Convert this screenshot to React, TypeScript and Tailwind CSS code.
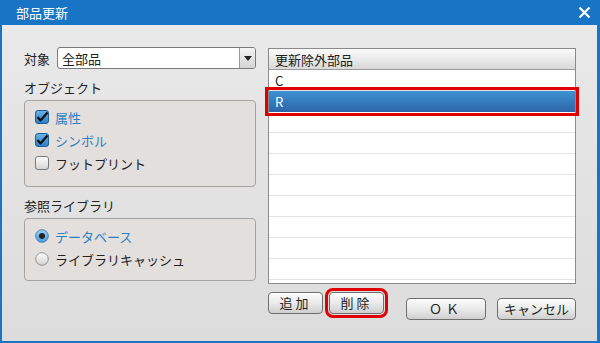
import React from "react";

const font = { fontFamily: '"Noto Sans CJK JP", "Noto Sans", sans-serif' };

function Check({ checked }: { checked: boolean }) {
  return (
    <svg width="14" height="14" viewBox="0 0 14 14" className="shrink-0">
      <defs>
        <linearGradient id={checked ? "cb1" : "cb0"} x1="0" y1="0" x2="0" y2="1">
          {checked ? (
            <>
              <stop offset="0" stopColor="#6bb3ea" />
              <stop offset="1" stopColor="#2b7fc9" />
            </>
          ) : (
            <>
              <stop offset="0" stopColor="#ffffff" />
              <stop offset="1" stopColor="#d2d2d2" />
            </>
          )}
        </linearGradient>
      </defs>
      <rect x="0.5" y="0.5" width="13" height="13" rx="2.5" fill={`url(#${checked ? "cb1" : "cb0"})`} stroke={checked ? "#1f5f95" : "#7a7a7a"} />
      {checked && <path d="M2.5 7 L5.5 10.5 L12.5 2.5" fill="none" stroke="#111" strokeWidth="2.2" strokeLinejoin="round" />}
    </svg>
  );
}

function Radio({ checked }: { checked: boolean }) {
  return (
    <svg width="14" height="14" viewBox="0 0 14 14" className="shrink-0">
      <defs>
        <linearGradient id={checked ? "rb1" : "rb0"} x1="0" y1="0" x2="0" y2="1">
          {checked ? (
            <>
              <stop offset="0" stopColor="#9fd0f5" />
              <stop offset="1" stopColor="#4b9be0" />
            </>
          ) : (
            <>
              <stop offset="0" stopColor="#ffffff" />
              <stop offset="1" stopColor="#cfcfcf" />
            </>
          )}
        </linearGradient>
      </defs>
      <circle cx="7" cy="7" r="6.3" fill={`url(#${checked ? "rb1" : "rb0"})`} stroke={checked ? "#3a78b0" : "#8a8a8a"} strokeWidth="0.9" />
      {checked && <circle cx="7" cy="7" r="3" fill="#222" />}
    </svg>
  );
}

function Btn({ children, className = "" }: { children: React.ReactNode; className?: string }) {
  return (
    <div
      className={`flex items-center justify-center rounded-[4px] border border-[#6e6e6e] bg-gradient-to-b from-[#fbfbfb] via-[#eaeaea] to-[#cfcfcf] text-[13px] text-[#222] shadow-[inset_0_1px_0_#fff] ${className}`}
    >
      {children}
    </div>
  );
}

export default function App() {
  const rows = ["C", "R", "", "", "", "", "", "", "", ""];
  return (
    <div className="flex h-[343px] w-[600px] flex-col bg-[#1874c4]" style={font}>
      <div className="flex h-[25px] items-center justify-between pl-[16px] pr-[9px] text-white">
        <span className="text-[13px] leading-none">部品更新</span>
        <svg width="13" height="13" viewBox="0 0 13 13">
          <path d="M1.5 1.5 L11.5 11.5 M11.5 1.5 L1.5 11.5" stroke="#fff" strokeWidth="2.2" />
        </svg>
      </div>
      <div className="mb-[2px] ml-[2px] mr-[3px] flex flex-1 gap-[12px] bg-gradient-to-b from-[#e9e9e9] to-[#dcdcdc] pl-[22px] pt-[22px] text-[13px] text-[#222]">
        {/* Left column */}
        <div className="flex w-[232px] flex-col">
          <div className="flex h-[22px] items-center">
            <span className="w-[33px] leading-none">対象</span>
            <div className="flex h-[22px] flex-1 items-stretch rounded-[3px] border border-[#7a7a7a] bg-white">
              <span className="flex flex-1 items-center pl-[4px] leading-none">全部品</span>
              <div className="flex w-[16px] items-center justify-center rounded-r-[2px] border-l border-[#9a9a9a] bg-gradient-to-b from-[#f4f4f4] to-[#d4d4d4]">
                <svg width="8" height="5" viewBox="0 0 8 5">
                  <path d="M0 0 L8 0 L4 5 Z" fill="#222" />
                </svg>
              </div>
            </div>
          </div>
          <div className="mt-[9px] h-[20px] leading-[20px]">オブジェクト</div>
          <div className="mt-[2px] flex h-[87px] flex-col gap-[5px] rounded-[4px] border border-[#a4a4a4] bg-[#e2dfdd] pl-[10px] pt-[7px]">
            <div className="flex h-[18px] items-center gap-[6px]">
              <Check checked />
              <span className="leading-none text-[#2f7fc4]">属性</span>
            </div>
            <div className="flex h-[18px] items-center gap-[6px]">
              <Check checked />
              <span className="leading-none text-[#2f7fc4]">シンボル</span>
            </div>
            <div className="flex h-[18px] items-center gap-[6px]">
              <Check checked={false} />
              <span className="leading-none">フットプリント</span>
            </div>
          </div>
          <div className="mt-[9px] h-[20px] leading-[20px]">参照ライブラリ</div>
          <div className="mt-[2px] flex h-[63px] flex-col gap-[5px] rounded-[4px] border border-[#a4a4a4] bg-[#e2dfdd] pl-[10px] pt-[8px]">
            <div className="flex h-[18px] items-center gap-[6px]">
              <Radio checked />
              <span className="leading-none text-[#2f7fc4]">データベース</span>
            </div>
            <div className="flex h-[18px] items-center gap-[6px]">
              <Radio checked={false} />
              <span className="leading-none">ライブラリキャッシュ</span>
            </div>
          </div>
        </div>
        {/* Right column */}
        <div className="flex w-[308px] flex-col pt-[1px]">
          <div className="flex h-[236px] flex-col border border-[#8a8a8a] bg-white">
            <div className="flex h-[21px] shrink-0 items-center border-b border-[#9a9a9a] bg-gradient-to-b from-[#fbfbfb] to-[#d9d9d9] pl-[6px] leading-none">
              更新除外部品
            </div>
            {rows.map((r, i) =>
              i === 1 ? (
                <div
                  key={i}
                  className="flex h-[21px] shrink-0 items-center bg-gradient-to-b from-[#3f92d2] to-[#2c65a8] pl-[6px] leading-none text-white outline-[3px] outline-offset-[1px] outline-[#e00000] outline-solid"
                >
                  {r}
                </div>
              ) : (
                <div key={i} className="flex h-[21px] shrink-0 items-center border-b border-[#e2e2e2] pl-[6px] leading-none">
                  {r}
                </div>
              )
            )}
          </div>
          <div className="mt-[8px] flex items-start">
            <Btn className="h-[22px] w-[55px] tracking-[3px]">追加</Btn>
            <Btn className="ml-[6px] h-[22px] w-[55px] tracking-[3px] outline-[3px] outline-offset-[1px] outline-[#e00000] outline-solid">削除</Btn>
            <Btn className="ml-[22px] mt-[6px] h-[22px] w-[80px] tracking-[4px]">ＯＫ</Btn>
            <Btn className="ml-[11px] mt-[6px] h-[22px] w-[79px]">キャンセル</Btn>
          </div>
        </div>
      </div>
    </div>
  );
}
